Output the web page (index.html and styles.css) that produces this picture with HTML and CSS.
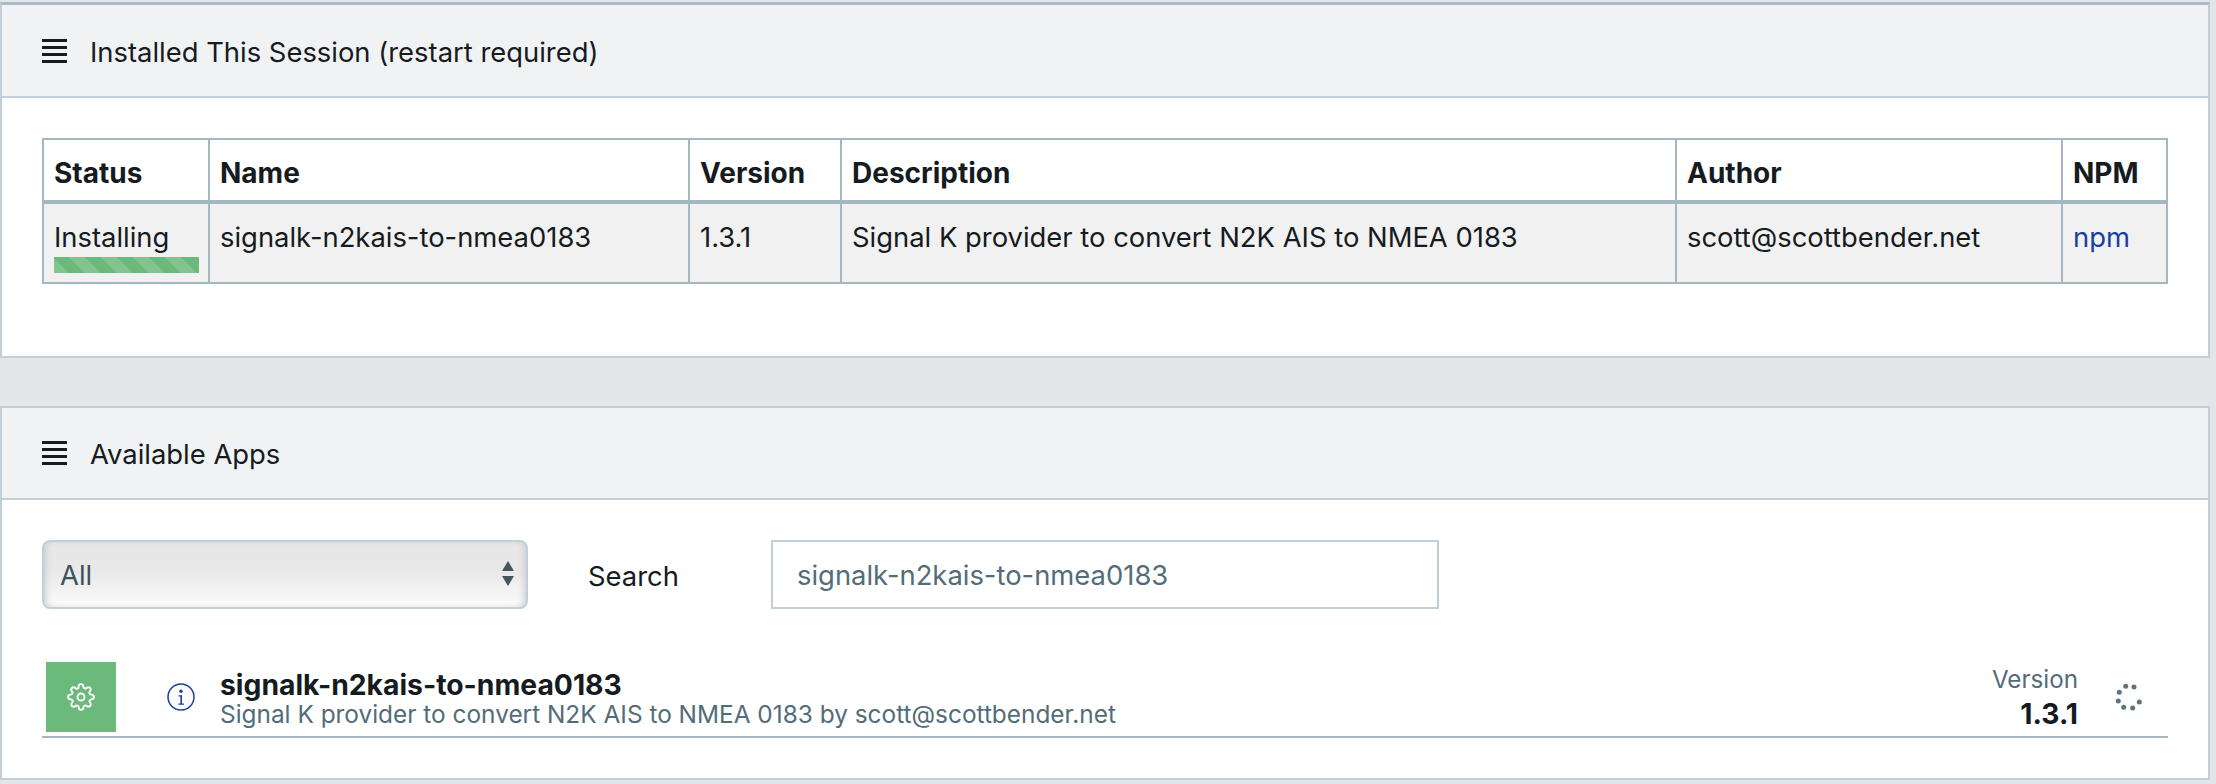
FILE: index.html
```html
<!DOCTYPE html>
<html lang="en">
<head>
<meta charset="utf-8">
<title>Apps</title>
<link rel="stylesheet" href="styles.css">
</head>
<body>
<main class="page">
  <section class="card card-first">
    <header class="card-header">
      <svg class="menu-icon" viewBox="0 0 25 24" aria-hidden="true"><path d="M0 0h25v3H0zM0 7h25v3H0zM0 14h25v3H0zM0 21h25v3H0z"/></svg>
      <span class="card-title">Installed This Session (restart required)</span>
    </header>
    <div class="card-body table-body">
      <table class="apps-table">
        <colgroup>
          <col class="c-status"><col class="c-name"><col class="c-version"><col class="c-desc"><col class="c-author"><col class="c-npm">
        </colgroup>
        <thead>
          <tr><th>Status</th><th>Name</th><th>Version</th><th>Description</th><th>Author</th><th>NPM</th></tr>
        </thead>
        <tbody>
          <tr>
            <td><div class="status-text">Installing</div><div class="progress"></div></td>
            <td>signalk-n2kais-to-nmea0183</td>
            <td>1.3.1</td>
            <td>Signal K provider to convert N2K AIS to NMEA 0183</td>
            <td>scott@scottbender.net</td>
            <td><a href="#">npm</a></td>
          </tr>
        </tbody>
      </table>
    </div>
  </section>

  <section class="card card-second">
    <header class="card-header">
      <svg class="menu-icon" viewBox="0 0 25 24" aria-hidden="true"><path d="M0 0h25v3H0zM0 7h25v3H0zM0 14h25v3H0zM0 21h25v3H0z"/></svg>
      <span class="card-title">Available Apps</span>
    </header>
    <div class="card-body apps-body">
      <div class="filters">
        <div class="select-wrap">
          <select class="category"><option>All</option></select>
          <svg class="select-arrows" viewBox="0 0 12 26" aria-hidden="true"><path d="M6 0l6 10H0zM0 15h12L6 25z"/></svg>
        </div>
        <label class="search-label" for="search">Search</label>
        <input id="search" class="search" type="text" value="signalk-n2kais-to-nmea0183">
      </div>
      <div class="app-row">
        <div class="app-tile">
          <svg class="gear" viewBox="0 0 24 24" aria-hidden="true"><circle cx="12" cy="12" r="3"/><path d="M19.4 15a1.65 1.65 0 0 0 .33 1.82l.06.06a2 2 0 1 1-2.83 2.83l-.06-.06a1.65 1.65 0 0 0-2.82 1.17V21a2 2 0 1 1-4 0v-.09A1.65 1.65 0 0 0 9 19.4a1.65 1.65 0 0 0-1.82.33l-.06.06a2 2 0 1 1-2.83-2.83l.06-.06A1.65 1.65 0 0 0 3.17 14H3a2 2 0 1 1 0-4h.09A1.65 1.65 0 0 0 4.6 9a1.65 1.65 0 0 0-.33-1.82l-.06-.06a2 2 0 1 1 2.83-2.83l.06.06A1.65 1.65 0 0 0 10 3.17V3a2 2 0 1 1 4 0v.09a1.65 1.65 0 0 0 2.82 1.17l.06-.06a2 2 0 1 1 2.83 2.83l-.06.06A1.65 1.65 0 0 0 20.83 10H21a2 2 0 1 1 0 4h-.09a1.65 1.65 0 0 0-1.51 1z"/></svg>
        </div>
        <svg class="info" viewBox="0 0 28 28" aria-hidden="true"><circle cx="14" cy="14" r="13"/><circle class="dot" cx="14" cy="8.2" r="1.7"/><path class="stem" d="M11.6 12.2h3.4v8.2h2v1.3h-5.6v-1.3h2v-6.9h-1.8z"/></svg>
        <div class="app-info">
          <div class="app-name">signalk-n2kais-to-nmea0183</div>
          <div class="app-desc">Signal K provider to convert N2K AIS to NMEA 0183 by scott@scottbender.net</div>
        </div>
        <div class="app-version">
          <div class="version-label">Version</div>
          <div class="version-num">1.3.1</div>
        </div>
        <svg class="spinner" viewBox="0 0 28 28" aria-hidden="true">
          <circle cx="10.7" cy="3.3" r="2.5"/><circle cx="19" cy="4" r="2.5"/><circle cx="4.3" cy="9.3" r="2.5"/><circle cx="3.3" cy="18" r="2.5"/><circle cx="8.7" cy="24.3" r="2.5"/><circle cx="17.7" cy="25" r="2.5"/><circle cx="24.3" cy="19" r="2.5"/>
        </svg>
      </div>
    </div>
  </section>
</main>
</body>
</html>
```
FILE: styles.css
```css
* { box-sizing: border-box; }
html, body { margin: 0; padding: 0; }
body {
  background: #e4e5e6;
  color: #151b1e;
  font-family: Inter, "Liberation Sans", sans-serif;
  font-size: 27.4px;
  height: 784px;
  overflow: hidden;
}
.page { padding: 2px 6px 0 0; }
.card {
  background: #fff;
  border: 2px solid #c2cfd6;
}
.card-first { border-top: 3px solid #a9bbc5; height: 356px; }
.card-second { margin-top: 48px; height: 374px; }
.card-header {
  display: flex;
  align-items: center;
  background: #f1f2f4;
  border-bottom: 2px solid #c2cfd6;
  padding-left: 40px;
  gap: 23px;
  height: 93px;
  line-height: 1;
}
.card-second .card-header { height: 92px; }
.card-title { padding-top: 4px; }
.menu-icon { width: 25px; height: 24px; fill: #151b1e; flex: none; }
.table-body { padding: 40px 40px 0; }
.apps-table {
  border-collapse: collapse;
  table-layout: fixed;
  width: 2124px;
  border: 2px solid #a4b7c1;
}
.c-status { width: 166px; }
.c-name { width: 480px; }
.c-version { width: 152px; }
.c-desc { width: 835px; }
.c-author { width: 386px; }
.c-npm { width: 105px; }
.apps-table th, .apps-table td {
  border: 2px solid #a4b7c1;
  padding: 0 10px;
  text-align: left;
  font-weight: 400;
  vertical-align: top;
}
.apps-table th {
  font-weight: 700;
  font-size: 28px;
  height: 63px;
  padding-top: 6px;
  vertical-align: middle;
  border-bottom-width: 4px;
  background: #fff;
}
.apps-table td {
  height: 81px;
  background: #f1f1f1;
  padding-top: 18px;
  line-height: 30px;
}
.apps-table a { color: #1a3f9e; text-decoration: none; }
.status-text { height: 35px; }
.progress {
  height: 16px;
  width: 145px;
  background-color: #6bba7c;
  background-image: linear-gradient(45deg, rgba(255,255,255,.15) 25%, transparent 25%, transparent 50%, rgba(255,255,255,.15) 50%, rgba(255,255,255,.15) 75%, transparent 75%);
  background-size: 32px 32px;
  background-position: 14px 0;
}
.apps-body { padding: 40px 40px 0; }
.filters { display: flex; align-items: center; height: 69px; }
.select-wrap { position: relative; width: 486px; height: 69px; flex: none; }
.category {
  appearance: none;
  -webkit-appearance: none;
  width: 100%;
  height: 100%;
  border: 2px solid #c2cfd6;
  border-radius: 8px;
  background: linear-gradient(#e6e6e6 0%, #e9e9e9 45%, #fbfbfb 100%);
  box-shadow: inset 5px 0 6px -3px #cfcfcf, inset -5px 0 6px -3px #cfcfcf;
  color: #3e515b;
  font: inherit;
  padding: 0 0 0 16px;
}
.select-arrows { position: absolute; right: 14px; top: 21px; width: 12px; height: 26px; fill: #47555f; }
.search-label { margin-left: 60px; width: 183px; flex: none; padding-top: 2px; }
.search {
  width: 668px;
  height: 69px;
  border: 2px solid #c2cfd6;
  background: #fff;
  color: #536c79;
  font: inherit;
  padding: 0 24px;
  outline: none;
}
.app-row {
  display: flex;
  align-items: center;
  margin-top: 53px;
  height: 76px;
  border-bottom: 2px solid #a4b7c1;
  padding: 0 0 4px 4px;
  width: 2126px;
}
.app-tile {
  width: 70px;
  height: 70px;
  background: #6bba7c;
  display: flex;
  align-items: center;
  justify-content: center;
  flex: none;
}
.gear { width: 28px; height: 28px; fill: none; stroke: #fff; stroke-width: 1.6; }
.info { width: 28px; height: 28px; margin-left: 51px; fill: none; stroke: #1a3f9e; stroke-width: 1.5; flex: none; }
.info .dot, .info .stem { fill: #1a3f9e; stroke: none; }
.app-info { margin-left: 25px; flex: 1; }
.app-name { font-weight: 700; font-size: 28.3px; line-height: 34px; }
.app-desc { color: #536c79; font-size: 24.4px; line-height: 24px; }
.app-version { text-align: right; line-height: 35px; flex: none; }
.version-label { color: #536c79; font-size: 24.2px; }
.version-num { font-weight: 700; font-size: 28.3px; }
.spinner { width: 28px; height: 28px; margin-left: 37px; margin-right: 25px; fill: #5d7380; flex: none; }
```
